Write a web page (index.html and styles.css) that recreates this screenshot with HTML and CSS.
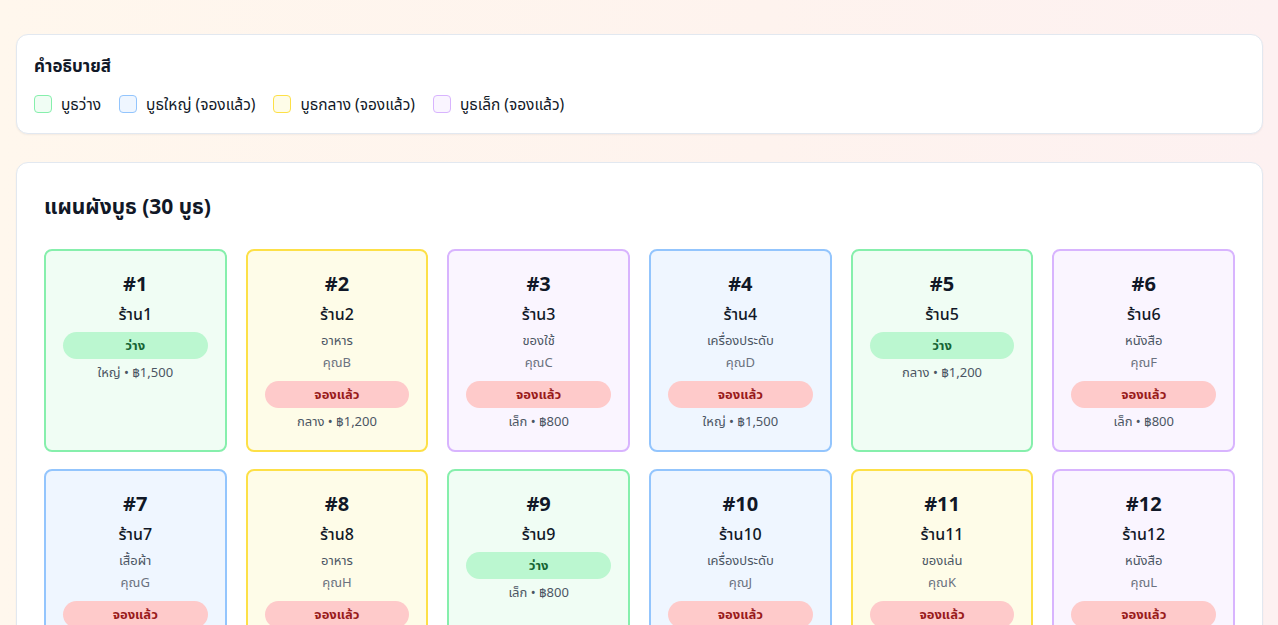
FILE: index.html
```html
<!DOCTYPE html>
<html lang="th">
<head>
<meta charset="utf-8">
<title>แผนผังบูธ</title>
<link rel="stylesheet" href="styles.css">
</head>
<body>
<main class="page">
  <section class="panel legend">
    <h2 class="legend-title">คำอธิบายสี</h2>
    <div class="legend-items">
      <div class="legend-item"><span class="swatch sw-free"></span>บูธว่าง</div>
      <div class="legend-item"><span class="swatch sw-large"></span>บูธใหญ่ (จองแล้ว)</div>
      <div class="legend-item"><span class="swatch sw-medium"></span>บูธกลาง (จองแล้ว)</div>
      <div class="legend-item"><span class="swatch sw-small"></span>บูธเล็ก (จองแล้ว)</div>
    </div>
  </section>

  <section class="panel map">
    <h1 class="map-title">แผนผังบูธ (30 บูธ)</h1>
    <div class="grid">
      <div class="booth free"><div class="num">#1</div><div class="name">ร้าน1</div><div class="badge badge-free">ว่าง</div><div class="price">ใหญ่ • ฿1,500</div></div>
      <div class="booth medium"><div class="num">#2</div><div class="name">ร้าน2</div><div class="cat">อาหาร</div><div class="owner">คุณB</div><div class="badge badge-booked">จองแล้ว</div><div class="price">กลาง • ฿1,200</div></div>
      <div class="booth small"><div class="num">#3</div><div class="name">ร้าน3</div><div class="cat">ของใช้</div><div class="owner">คุณC</div><div class="badge badge-booked">จองแล้ว</div><div class="price">เล็ก • ฿800</div></div>
      <div class="booth large"><div class="num">#4</div><div class="name">ร้าน4</div><div class="cat">เครื่องประดับ</div><div class="owner">คุณD</div><div class="badge badge-booked">จองแล้ว</div><div class="price">ใหญ่ • ฿1,500</div></div>
      <div class="booth free"><div class="num">#5</div><div class="name">ร้าน5</div><div class="badge badge-free">ว่าง</div><div class="price">กลาง • ฿1,200</div></div>
      <div class="booth small"><div class="num">#6</div><div class="name">ร้าน6</div><div class="cat">หนังสือ</div><div class="owner">คุณF</div><div class="badge badge-booked">จองแล้ว</div><div class="price">เล็ก • ฿800</div></div>
      <div class="booth large"><div class="num">#7</div><div class="name">ร้าน7</div><div class="cat">เสื้อผ้า</div><div class="owner">คุณG</div><div class="badge badge-booked">จองแล้ว</div><div class="price">ใหญ่ • ฿1,500</div></div>
      <div class="booth medium"><div class="num">#8</div><div class="name">ร้าน8</div><div class="cat">อาหาร</div><div class="owner">คุณH</div><div class="badge badge-booked">จองแล้ว</div><div class="price">กลาง • ฿1,200</div></div>
      <div class="booth free"><div class="num">#9</div><div class="name">ร้าน9</div><div class="badge badge-free">ว่าง</div><div class="price">เล็ก • ฿800</div></div>
      <div class="booth large"><div class="num">#10</div><div class="name">ร้าน10</div><div class="cat">เครื่องประดับ</div><div class="owner">คุณJ</div><div class="badge badge-booked">จองแล้ว</div><div class="price">ใหญ่ • ฿1,500</div></div>
      <div class="booth medium"><div class="num">#11</div><div class="name">ร้าน11</div><div class="cat">ของเล่น</div><div class="owner">คุณK</div><div class="badge badge-booked">จองแล้ว</div><div class="price">กลาง • ฿1,200</div></div>
      <div class="booth small"><div class="num">#12</div><div class="name">ร้าน12</div><div class="cat">หนังสือ</div><div class="owner">คุณL</div><div class="badge badge-booked">จองแล้ว</div><div class="price">เล็ก • ฿800</div></div>
      <div class="booth free"><div class="num">#13</div><div class="name">ร้าน13</div><div class="badge badge-free">ว่าง</div><div class="price">ใหญ่ • ฿1,500</div></div>
      <div class="booth medium"><div class="num">#14</div><div class="name">ร้าน14</div><div class="cat">อาหาร</div><div class="owner">คุณN</div><div class="badge badge-booked">จองแล้ว</div><div class="price">กลาง • ฿1,200</div></div>
      <div class="booth small"><div class="num">#15</div><div class="name">ร้าน15</div><div class="cat">ของใช้</div><div class="owner">คุณO</div><div class="badge badge-booked">จองแล้ว</div><div class="price">เล็ก • ฿800</div></div>
      <div class="booth large"><div class="num">#16</div><div class="name">ร้าน16</div><div class="cat">เครื่องประดับ</div><div class="owner">คุณP</div><div class="badge badge-booked">จองแล้ว</div><div class="price">ใหญ่ • ฿1,500</div></div>
      <div class="booth free"><div class="num">#17</div><div class="name">ร้าน17</div><div class="badge badge-free">ว่าง</div><div class="price">กลาง • ฿1,200</div></div>
      <div class="booth small"><div class="num">#18</div><div class="name">ร้าน18</div><div class="cat">หนังสือ</div><div class="owner">คุณR</div><div class="badge badge-booked">จองแล้ว</div><div class="price">เล็ก • ฿800</div></div>
      <div class="booth large"><div class="num">#19</div><div class="name">ร้าน19</div><div class="cat">เสื้อผ้า</div><div class="owner">คุณS</div><div class="badge badge-booked">จองแล้ว</div><div class="price">ใหญ่ • ฿1,500</div></div>
      <div class="booth medium"><div class="num">#20</div><div class="name">ร้าน20</div><div class="cat">อาหาร</div><div class="owner">คุณT</div><div class="badge badge-booked">จองแล้ว</div><div class="price">กลาง • ฿1,200</div></div>
      <div class="booth free"><div class="num">#21</div><div class="name">ร้าน21</div><div class="badge badge-free">ว่าง</div><div class="price">เล็ก • ฿800</div></div>
      <div class="booth large"><div class="num">#22</div><div class="name">ร้าน22</div><div class="cat">เครื่องประดับ</div><div class="owner">คุณV</div><div class="badge badge-booked">จองแล้ว</div><div class="price">ใหญ่ • ฿1,500</div></div>
      <div class="booth medium"><div class="num">#23</div><div class="name">ร้าน23</div><div class="cat">ของเล่น</div><div class="owner">คุณW</div><div class="badge badge-booked">จองแล้ว</div><div class="price">กลาง • ฿1,200</div></div>
      <div class="booth small"><div class="num">#24</div><div class="name">ร้าน24</div><div class="cat">หนังสือ</div><div class="owner">คุณX</div><div class="badge badge-booked">จองแล้ว</div><div class="price">เล็ก • ฿800</div></div>
      <div class="booth free"><div class="num">#25</div><div class="name">ร้าน25</div><div class="badge badge-free">ว่าง</div><div class="price">ใหญ่ • ฿1,500</div></div>
      <div class="booth medium"><div class="num">#26</div><div class="name">ร้าน26</div><div class="cat">อาหาร</div><div class="owner">คุณZ</div><div class="badge badge-booked">จองแล้ว</div><div class="price">กลาง • ฿1,200</div></div>
      <div class="booth small"><div class="num">#27</div><div class="name">ร้าน27</div><div class="cat">ของใช้</div><div class="owner">คุณA</div><div class="badge badge-booked">จองแล้ว</div><div class="price">เล็ก • ฿800</div></div>
      <div class="booth large"><div class="num">#28</div><div class="name">ร้าน28</div><div class="cat">เครื่องประดับ</div><div class="owner">คุณB</div><div class="badge badge-booked">จองแล้ว</div><div class="price">ใหญ่ • ฿1,500</div></div>
      <div class="booth free"><div class="num">#29</div><div class="name">ร้าน29</div><div class="badge badge-free">ว่าง</div><div class="price">กลาง • ฿1,200</div></div>
      <div class="booth small"><div class="num">#30</div><div class="name">ร้าน30</div><div class="cat">หนังสือ</div><div class="owner">คุณD</div><div class="badge badge-booked">จองแล้ว</div><div class="price">เล็ก • ฿800</div></div>
    </div>
  </section>
</main>
</body>
</html>
```

FILE: styles.css
```css
* { box-sizing: border-box; }

html, body {
  margin: 0;
  padding: 0;
}

body {
  font-family: "Noto Sans", "Noto Sans Thai", "DejaVu Sans", sans-serif;
  color: #111827;
  background: linear-gradient(90deg, #fff7ed 0%, #fef3ee 60%, #fdf1f1 100%);
  min-height: 100vh;
}

.page {
  padding: 34px 15px 16px 16px;
  display: flex;
  flex-direction: column;
  gap: 28px;
}

.panel {
  background: #ffffff;
  border: 1px solid #e2e8f0;
  border-radius: 12px;
  box-shadow: 0 1px 2px rgba(15, 23, 42, 0.05);
}

/* legend */
.legend {
  padding: 16px 17px 17px 17px;
}

.legend-title {
  margin: 0 0 11px 0;
  font-size: 17px;
  font-weight: 700;
  line-height: 30px;
}

.legend-items {
  display: flex;
  align-items: center;
  gap: 18px;
  font-size: 15.5px;
  line-height: 24px;
}

.legend-item {
  display: flex;
  align-items: center;
  gap: 9px;
}

.swatch {
  width: 18px;
  height: 18px;
  border-radius: 4px;
  border: 1px solid;
}

.sw-free { background: #f0fdf4; border-color: #86efac; }
.sw-large { background: #eff6ff; border-color: #93c5fd; }
.sw-medium { background: #fefce8; border-color: #fde047; }
.sw-small { background: #faf5ff; border-color: #d8b4fe; }

/* map */
.map {
  padding: 27px 27px 28px 27px;
}

.map-title {
  margin: 0 0 27px 0;
  font-size: 21px;
  font-weight: 700;
  line-height: 32px;
}

.grid {
  display: grid;
  grid-template-columns: repeat(6, 1fr);
  gap: 17px 19.2px;
}

.booth {
  border: 2px solid;
  border-radius: 8px;
  padding: 18px 17px 19px 17px;
  text-align: center;
}

.booth.free { background: #f0fdf4; border-color: #86efac; }
.booth.large { background: #eff6ff; border-color: #93c5fd; }
.booth.medium { background: #fefce8; border-color: #fde047; }
.booth.small { background: #faf5ff; border-color: #d8b4fe; }

.num {
  font-size: 20px;
  font-weight: 700;
  line-height: 30px;
}

.name {
  margin-top: 3px;
  font-size: 16px;
  font-weight: 500;
  line-height: 24px;
}

.cat {
  margin-top: 4px;
  font-size: 13px;
  line-height: 20px;
  color: #4b5563;
}

.owner {
  margin-top: 2px;
  font-size: 13px;
  line-height: 20px;
  color: #6b7280;
}

.badge {
  margin-top: 6px;
  height: 27px;
  border-radius: 999px;
  font-size: 13px;
  font-weight: 700;
  line-height: 27px;
}

.owner + .badge { margin-top: 9px; }

.badge-free { background: #bbf7d0; color: #166534; }
.badge-booked { background: #fecaca; color: #991b1b; }

.price {
  margin-top: 3px;
  font-size: 13px;
  line-height: 20px;
  color: #4b5563;
}
```
